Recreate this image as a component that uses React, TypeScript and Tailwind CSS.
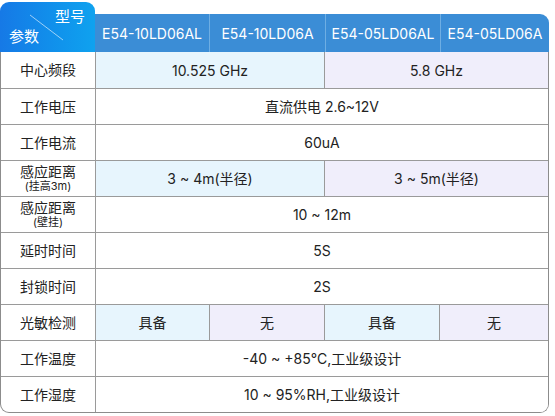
const font = { fontFamily: 'Inter, "Noto Sans CJK SC", sans-serif' };

type Cell = { text: string; span?: 1 | 2 | 4; tone?: "blue" | "purple" | "white" };
type Row = { label: string; sub?: string; cells: Cell[] };

const rows: Row[] = [
  {
    label: "中心频段",
    cells: [
      { text: "10.525 GHz", span: 2, tone: "blue" },
      { text: "5.8 GHz", span: 2, tone: "purple" },
    ],
  },
  { label: "工作电压", cells: [{ text: "直流供电 2.6~12V", span: 4 }] },
  { label: "工作电流", cells: [{ text: "60uA", span: 4 }] },
  {
    label: "感应距离",
    sub: "(挂高3m)",
    cells: [
      { text: "3 ~ 4m(半径)", span: 2, tone: "blue" },
      { text: "3 ~ 5m(半径)", span: 2, tone: "purple" },
    ],
  },
  { label: "感应距离", sub: "(壁挂)", cells: [{ text: "10 ~ 12m", span: 4 }] },
  { label: "延时时间", cells: [{ text: "5S", span: 4 }] },
  { label: "封锁时间", cells: [{ text: "2S", span: 4 }] },
  {
    label: "光敏检测",
    cells: [
      { text: "具备", tone: "blue" },
      { text: "无", tone: "purple" },
      { text: "具备", tone: "blue" },
      { text: "无", tone: "purple" },
    ],
  },
  { label: "工作温度", cells: [{ text: "-40 ~ +85°C,工业级设计", span: 4 }] },
  { label: "工作湿度", cells: [{ text: "10 ~ 95%RH,工业级设计", span: 4 }] },
];

const models = ["E54-10LD06AL", "E54-10LD06A", "E54-05LD06AL", "E54-05LD06A"];

function spanClass(span?: number) {
  if (span === 4) return "col-span-4";
  if (span === 2) return "col-span-2";
  return "col-span-1";
}

function toneClass(tone?: string) {
  if (tone === "blue") return "bg-[#e7f5fd]";
  if (tone === "purple") return "bg-[#f0eefb]";
  return "bg-white";
}

export default function App() {
  return (
    <div className="w-[555px] h-[416px] bg-white text-[#222]" style={font}>
      <div className="w-[549px] pt-[2px]">
        {/* Header */}
        <div className="flex items-end">
          <div className="relative w-[95px] h-[50px] shrink-0 rounded-t-[9px] bg-gradient-to-r from-[#1679e6] to-[#0fa2ef] text-white">
            <svg className="absolute left-0 top-0" width="95" height="50">
              <line x1="30" y1="13" x2="63" y2="38" stroke="rgba(255,255,255,0.75)" strokeWidth="0.8" />
            </svg>
            <span className="absolute left-[55px] top-[5px] text-[15px] leading-[20px]">型号</span>
            <span className="absolute left-[9px] top-[25px] text-[15px] leading-[20px]">参数</span>
          </div>
          <div className="flex-1 h-[38px] flex bg-[#3b8dd6] rounded-tr-[9px] overflow-hidden text-white text-[14px]">
            {models.map((m, i) => (
              <div
                key={m}
                className={
                  "h-full flex items-center justify-center " +
                  (i === 0 ? "w-[114px]" : "border-l border-[#6eaee3] " + (i === 3 ? "flex-1" : i === 1 ? "w-[116px]" : "w-[115px]"))
                }
              >
                {m}
              </div>
            ))}
          </div>
        </div>

        {/* Body */}
        <div className="border border-[#8c8c8c] border-t-0 rounded-b-[9px] overflow-hidden grid grid-cols-[94px_114px_115px_115px_1fr]">
          {rows.map((r, ri) => (
            <div key={ri} className="contents">
              <div
                className={
                  "h-[36px] flex flex-col items-center justify-center text-[14px] " +
                  (ri === 0 ? "" : "border-t border-[#9a9a9a]")
                }
              >
                <span className={r.sub ? "leading-[16px]" : "leading-[20px]"}>{r.label}</span>
                {r.sub && <span className="text-[11px] leading-[13px]">{r.sub}</span>}
              </div>
              {r.cells.map((c, ci) => (
                <div
                  key={ci}
                  className={
                    "h-[36px] flex items-center justify-center text-[14px] border-l border-[#9a9a9a] " +
                    spanClass(c.span) +
                    " " +
                    toneClass(c.tone) +
                    (ri === 0 ? "" : " border-t")
                  }
                >
                  {c.text}
                </div>
              ))}
            </div>
          ))}
        </div>
      </div>
    </div>
  );
}
